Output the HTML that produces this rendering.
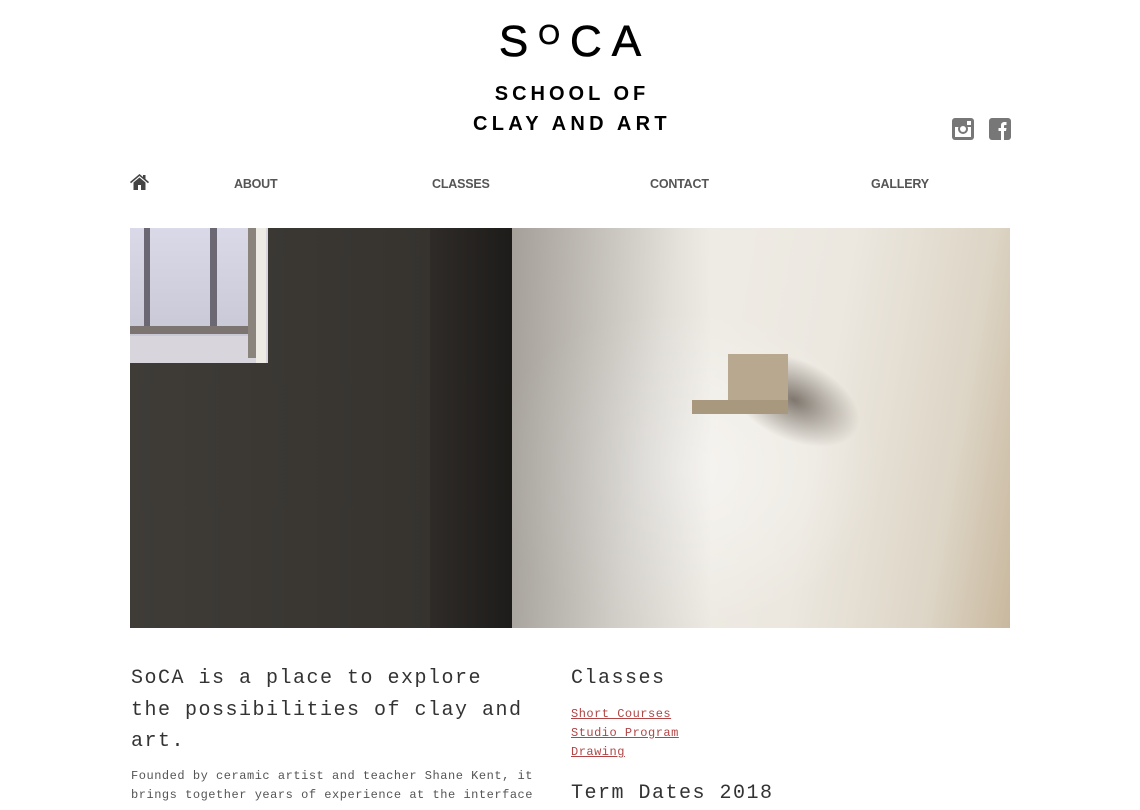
<!DOCTYPE html>
<html><head><meta charset="utf-8"><style>
*{margin:0;padding:0;box-sizing:border-box}
body{width:1140px;height:799px;overflow:hidden;background:#fff;font-family:"Liberation Sans",sans-serif;position:relative}
.logo{position:absolute;left:0;width:1140px;text-align:center;color:#000;font-weight:bold}
.nav{position:absolute;top:177px;font-size:12.5px;font-weight:bold;color:#555;letter-spacing:-0.2px}
.mono{font-family:"Liberation Mono",monospace;position:absolute}
.img{position:absolute;left:130px;top:228px;width:880px;height:400px;overflow:hidden;background:#3d3a36}
.img div{position:absolute}
a{color:#b04545;text-decoration:underline}
</style></head><body>
<div class="logo" style="top:17px;font-size:44px;letter-spacing:10px;padding-left:10px;font-weight:normal;-webkit-text-stroke:0.6px #000">S<span style="font-size:28px;position:relative;top:-12px">O</span>CA</div>
<div class="logo" style="top:83px;font-size:20px;letter-spacing:4px;padding-left:4px">SCHOOL OF</div>
<div class="logo" style="top:113px;font-size:20px;letter-spacing:4.3px;padding-left:4px">CLAY AND ART</div>
<svg style="position:absolute;left:952px;top:118px" width="22" height="22" viewBox="0 0 22 22"><rect x="0" y="0" width="22" height="22" rx="3" fill="#777"/><rect x="3" y="9" width="16" height="10" fill="#fff"/><circle cx="11" cy="11" r="5" fill="#777"/><circle cx="11" cy="11" r="3" fill="#fff"/><rect x="15" y="3" width="4" height="4" fill="#fff"/></svg>
<svg style="position:absolute;left:989px;top:118px" width="22" height="22" viewBox="0 0 22 22"><rect x="0" y="0" width="22" height="22" rx="3" fill="#777"/><path d="M12 22V13H9.5V10H12V7.5C12 5 13.5 4 15.5 4H17.5V7H16C15 7 15 7.5 15 8.3V10H17.5L17 13H15V22Z" fill="#fff"/></svg>
<svg style="position:absolute;left:130px;top:174px" width="19" height="16" viewBox="0 0 19 16"><path d="M9.5 0L0 8l1 1.2L9.5 2 18 9.2 19 8 15.5 5V1h-2.5v2z" fill="#444"/><path d="M3.5 8.5L9.5 3.5l6 5V16h-4.5v-5h-3v5H3.5z" fill="#444"/></svg>
<div class="nav" style="left:234px">ABOUT</div>
<div class="nav" style="left:432px">CLASSES</div>
<div class="nav" style="left:650px">CONTACT</div>
<div class="nav" style="left:871px">GALLERY</div>
<div class="img">
<div style="left:382px;top:0;width:498px;height:400px;background:linear-gradient(100deg,#ddd9d1 0%,#efece6 30%,#ece8e0 60%,#ddd5c6 85%,#c9b89e 100%)"></div>
<div style="left:382px;top:0;width:498px;height:400px;background:radial-gradient(ellipse 200px 160px at 170px 240px,rgba(255,255,255,.5),rgba(255,255,255,0))"></div>
<div style="left:382px;top:0;width:200px;height:400px;background:linear-gradient(90deg,rgba(60,55,50,.35),rgba(60,55,50,0))"></div>
<div style="left:300px;top:0;width:82px;height:400px;background:linear-gradient(90deg,#2e2b28,#1e1c1a)"></div>
<div style="left:0;top:0;width:300px;height:400px;background:linear-gradient(90deg,#3f3c38,#36332f)"></div>
<div style="left:0;top:0;width:138px;height:135px;background:#d8d6dc"></div>
<div style="left:0;top:0;width:118px;height:108px;background:linear-gradient(180deg,#d9d9e8,#c8c8d6)"></div>
<div style="left:14px;top:0;width:6px;height:100px;background:#6b6874"></div>
<div style="left:80px;top:0;width:7px;height:100px;background:#6b6874"></div>
<div style="left:0;top:98px;width:120px;height:8px;background:#7b7470"></div>
<div style="left:118px;top:0;width:8px;height:130px;background:#8a847c"></div>
<div style="left:126px;top:0;width:10px;height:135px;background:#eeeae4"></div>
<div style="left:600px;top:140px;width:160px;height:90px;background:radial-gradient(ellipse 70px 40px at 60px 40px,rgba(80,70,60,.7),rgba(80,70,60,0));transform:rotate(25deg)"></div>
<div style="left:598px;top:126px;width:60px;height:50px;background:#b8a890"></div>
<div style="left:562px;top:172px;width:96px;height:14px;background:#a8987e"></div>
</div>
<div class="mono" style="left:131px;top:663px;font-size:20px;line-height:31.5px;letter-spacing:1.5px;color:#333;width:405px">SoCA is a place to explore the possibilities of clay and art.</div>
<div class="mono" style="left:131px;top:767px;font-size:12px;line-height:19px;letter-spacing:0.53px;color:#555;width:420px">Founded by ceramic artist and teacher Shane Kent, it brings together years of experience at the interface</div>
<div class="mono" style="left:571px;top:663px;font-size:20px;line-height:31.5px;letter-spacing:1.5px;color:#333">Classes</div>
<div class="mono" style="left:571px;top:705px;font-size:12px;line-height:19px;letter-spacing:0.5px"><a>Short Courses</a><br><a>Studio Program</a><br><a>Drawing</a></div>
<div class="mono" style="left:571px;top:778px;font-size:20px;line-height:31.5px;letter-spacing:1.5px;color:#333">Term Dates 2018</div>
</body></html>
